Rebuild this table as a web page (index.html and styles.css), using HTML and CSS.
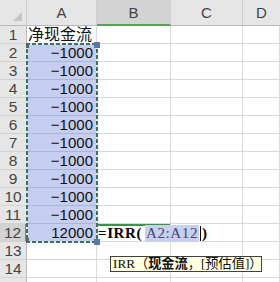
FILE: index.html
```html
<!DOCTYPE html>
<html lang="zh">
<head>
<meta charset="utf-8">
<link rel="stylesheet" href="styles.css">
</head>
<body>
<div class="wrap">
  <div class="sheet">
    <div class="hd corner"><span class="tri"></span></div>
    <div class="hd col">A</div>
    <div class="hd col sel">B</div>
    <div class="hd col">C</div>
    <div class="hd col last">D</div>

    <div class="rh">1</div><div class="c txt">净现金流</div><div class="c"></div><div class="c"></div><div class="c"></div>
    <div class="rh">2</div><div class="c num in">−1000</div><div class="c"></div><div class="c"></div><div class="c"></div>
    <div class="rh">3</div><div class="c num in">−1000</div><div class="c"></div><div class="c"></div><div class="c"></div>
    <div class="rh">4</div><div class="c num in">−1000</div><div class="c"></div><div class="c"></div><div class="c"></div>
    <div class="rh">5</div><div class="c num in">−1000</div><div class="c"></div><div class="c"></div><div class="c"></div>
    <div class="rh">6</div><div class="c num in">−1000</div><div class="c"></div><div class="c"></div><div class="c"></div>
    <div class="rh">7</div><div class="c num in">−1000</div><div class="c"></div><div class="c"></div><div class="c"></div>
    <div class="rh">8</div><div class="c num in">−1000</div><div class="c"></div><div class="c"></div><div class="c"></div>
    <div class="rh">9</div><div class="c num in">−1000</div><div class="c"></div><div class="c"></div><div class="c"></div>
    <div class="rh">10</div><div class="c num in">−1000</div><div class="c"></div><div class="c"></div><div class="c"></div>
    <div class="rh">11</div><div class="c num in">−1000</div><div class="c"></div><div class="c"></div><div class="c"></div>
    <div class="rh rsel">12</div><div class="c num in">12000</div><div class="c active"></div><div class="c"></div><div class="c"></div>
    <div class="rh">13</div><div class="c"></div><div class="c"></div><div class="c"></div><div class="c"></div>
    <div class="rh">14</div><div class="c"></div><div class="c"></div><div class="c"></div><div class="c"></div>
    <div class="rh"></div><div class="c"></div><div class="c"></div><div class="c"></div><div class="c"></div>
  </div>

  <div class="marquee">
    <span class="h h-tl"></span><span class="h h-tr"></span>
    <span class="h h-bl"></span><span class="h h-br"></span>
  </div>

  <div class="editor"><b class="fn">=IRR(</b><span class="ref">A2:A12</span><span class="caret"></span><b>)</b></div>

  <div class="tip">IRR（<b>现金流</b>，[预估值]）</div>
</div>
</body>
</html>
```
FILE: styles.css
```css
html, body {
  margin: 0;
  padding: 0;
  background: #ffffff;
}
.wrap {
  position: relative;
  width: 280px;
  height: 282px;
  overflow: hidden;
  font-family: "Liberation Sans", "Noto Sans CJK SC", sans-serif;
}
.sheet {
  display: grid;
  grid-template-columns: 27px 70px 74px 72px 37px;
  grid-template-rows: 26px repeat(15, 18px);
}
.sheet > div {
  box-sizing: border-box;
}
.hd {
  background: #e6e6e6;
  border-right: 1px solid #cfcfcf;
  border-bottom: 1px solid #b9b9b9;
  color: #444;
  font-size: 15px;
  line-height: 25px;
  text-align: center;
}
.hd.sel {
  background: #d3d3d3;
  border-bottom: 2px solid #5aa05a;
}
.hd.last {
  border-right: none;
}
.corner {
  position: relative;
}
.tri {
  position: absolute;
  right: 4px;
  bottom: 4px;
  width: 0;
  height: 0;
  border-left: 9px solid transparent;
  border-bottom: 9px solid #c4c4c4;
}
.rh {
  background: #e6e6e6;
  border-right: 1px solid #b9b9b9;
  border-bottom: 1px solid #d2d2d2;
  color: #444;
  font-size: 15.5px;
  line-height: 18px;
  text-align: center;
}
.rh.rsel {
  background: #d3d3d3;
  border-right: 2px solid #5aa05a;
}
.c {
  border-right: 1px solid #d9d9d9;
  border-bottom: 1px solid #d9d9d9;
  font-size: 15px;
  line-height: 18px;
  color: #111;
  white-space: nowrap;
}
.c.txt {
  font-size: 16px;
  padding-left: 1px;
}
.c.num {
  text-align: right;
  padding-right: 3px;
}
.c.in {
  background: #c5cdf0;
  border-bottom-color: #aab4de;
  border-right-color: #aab4de;
}
.c.active {
  box-shadow: inset 0 2px 0 #3f8f4f;
}
.marquee {
  position: absolute;
  left: 26px;
  top: 43px;
  width: 72px;
  height: 200px;
  background:
    repeating-linear-gradient(90deg, #3b7262 0 4px, #d8ece4 4px 6px) left top / 100% 2px no-repeat,
    repeating-linear-gradient(90deg, #3b7262 0 4px, #d8ece4 4px 6px) left bottom / 100% 2px no-repeat,
    repeating-linear-gradient(180deg, #3b7262 0 4px, #d8ece4 4px 6px) left top / 2px 100% no-repeat,
    repeating-linear-gradient(180deg, #3b7262 0 4px, #d8ece4 4px 6px) right top / 2px 100% no-repeat;
}
.h {
  position: absolute;
  width: 5px;
  height: 5px;
  background: #5876a8;
}
.h-tl { left: 0; top: 0; background: #4a6f6a; width: 3px; }
.h-tr { right: -2px; top: -1px; width: 6px; height: 6px; }
.h-bl { left: 0; bottom: 0; background: #4a6f6a; width: 3px; }
.h-br { right: -2px; bottom: -2px; width: 6px; height: 6px; }
.editor {
  position: absolute;
  left: 98px;
  top: 225px;
  height: 17px;
  font-family: "Liberation Serif", "Noto Sans CJK SC", serif;
  font-size: 15px;
  line-height: 17px;
  color: #000;
  white-space: nowrap;
  display: flex;
  align-items: center;
}
.editor b {
  font-weight: bold;
}
.editor .fn {
  letter-spacing: 0.6px;
}
.ref {
  background: #c9d0ee;
  color: #3c4778;
  margin-left: 3px;
  padding: 0 1px;
  letter-spacing: 0.6px;
}
.caret {
  display: inline-block;
  width: 1px;
  height: 15px;
  background: #000;
  margin: 0 1px;
}
.tip {
  position: absolute;
  left: 110px;
  top: 256px;
  width: 152px;
  height: 16px;
  box-sizing: border-box;
  background: #ffffe1;
  border: 1px solid #404040;
  font-family: "Liberation Serif", "Noto Sans CJK SC", serif;
  font-size: 13.2px;
  line-height: 14px;
  padding-left: 2px;
  color: #111;
  white-space: nowrap;
  overflow: hidden;
}
.tip b {
  font-weight: 600;
}
```
